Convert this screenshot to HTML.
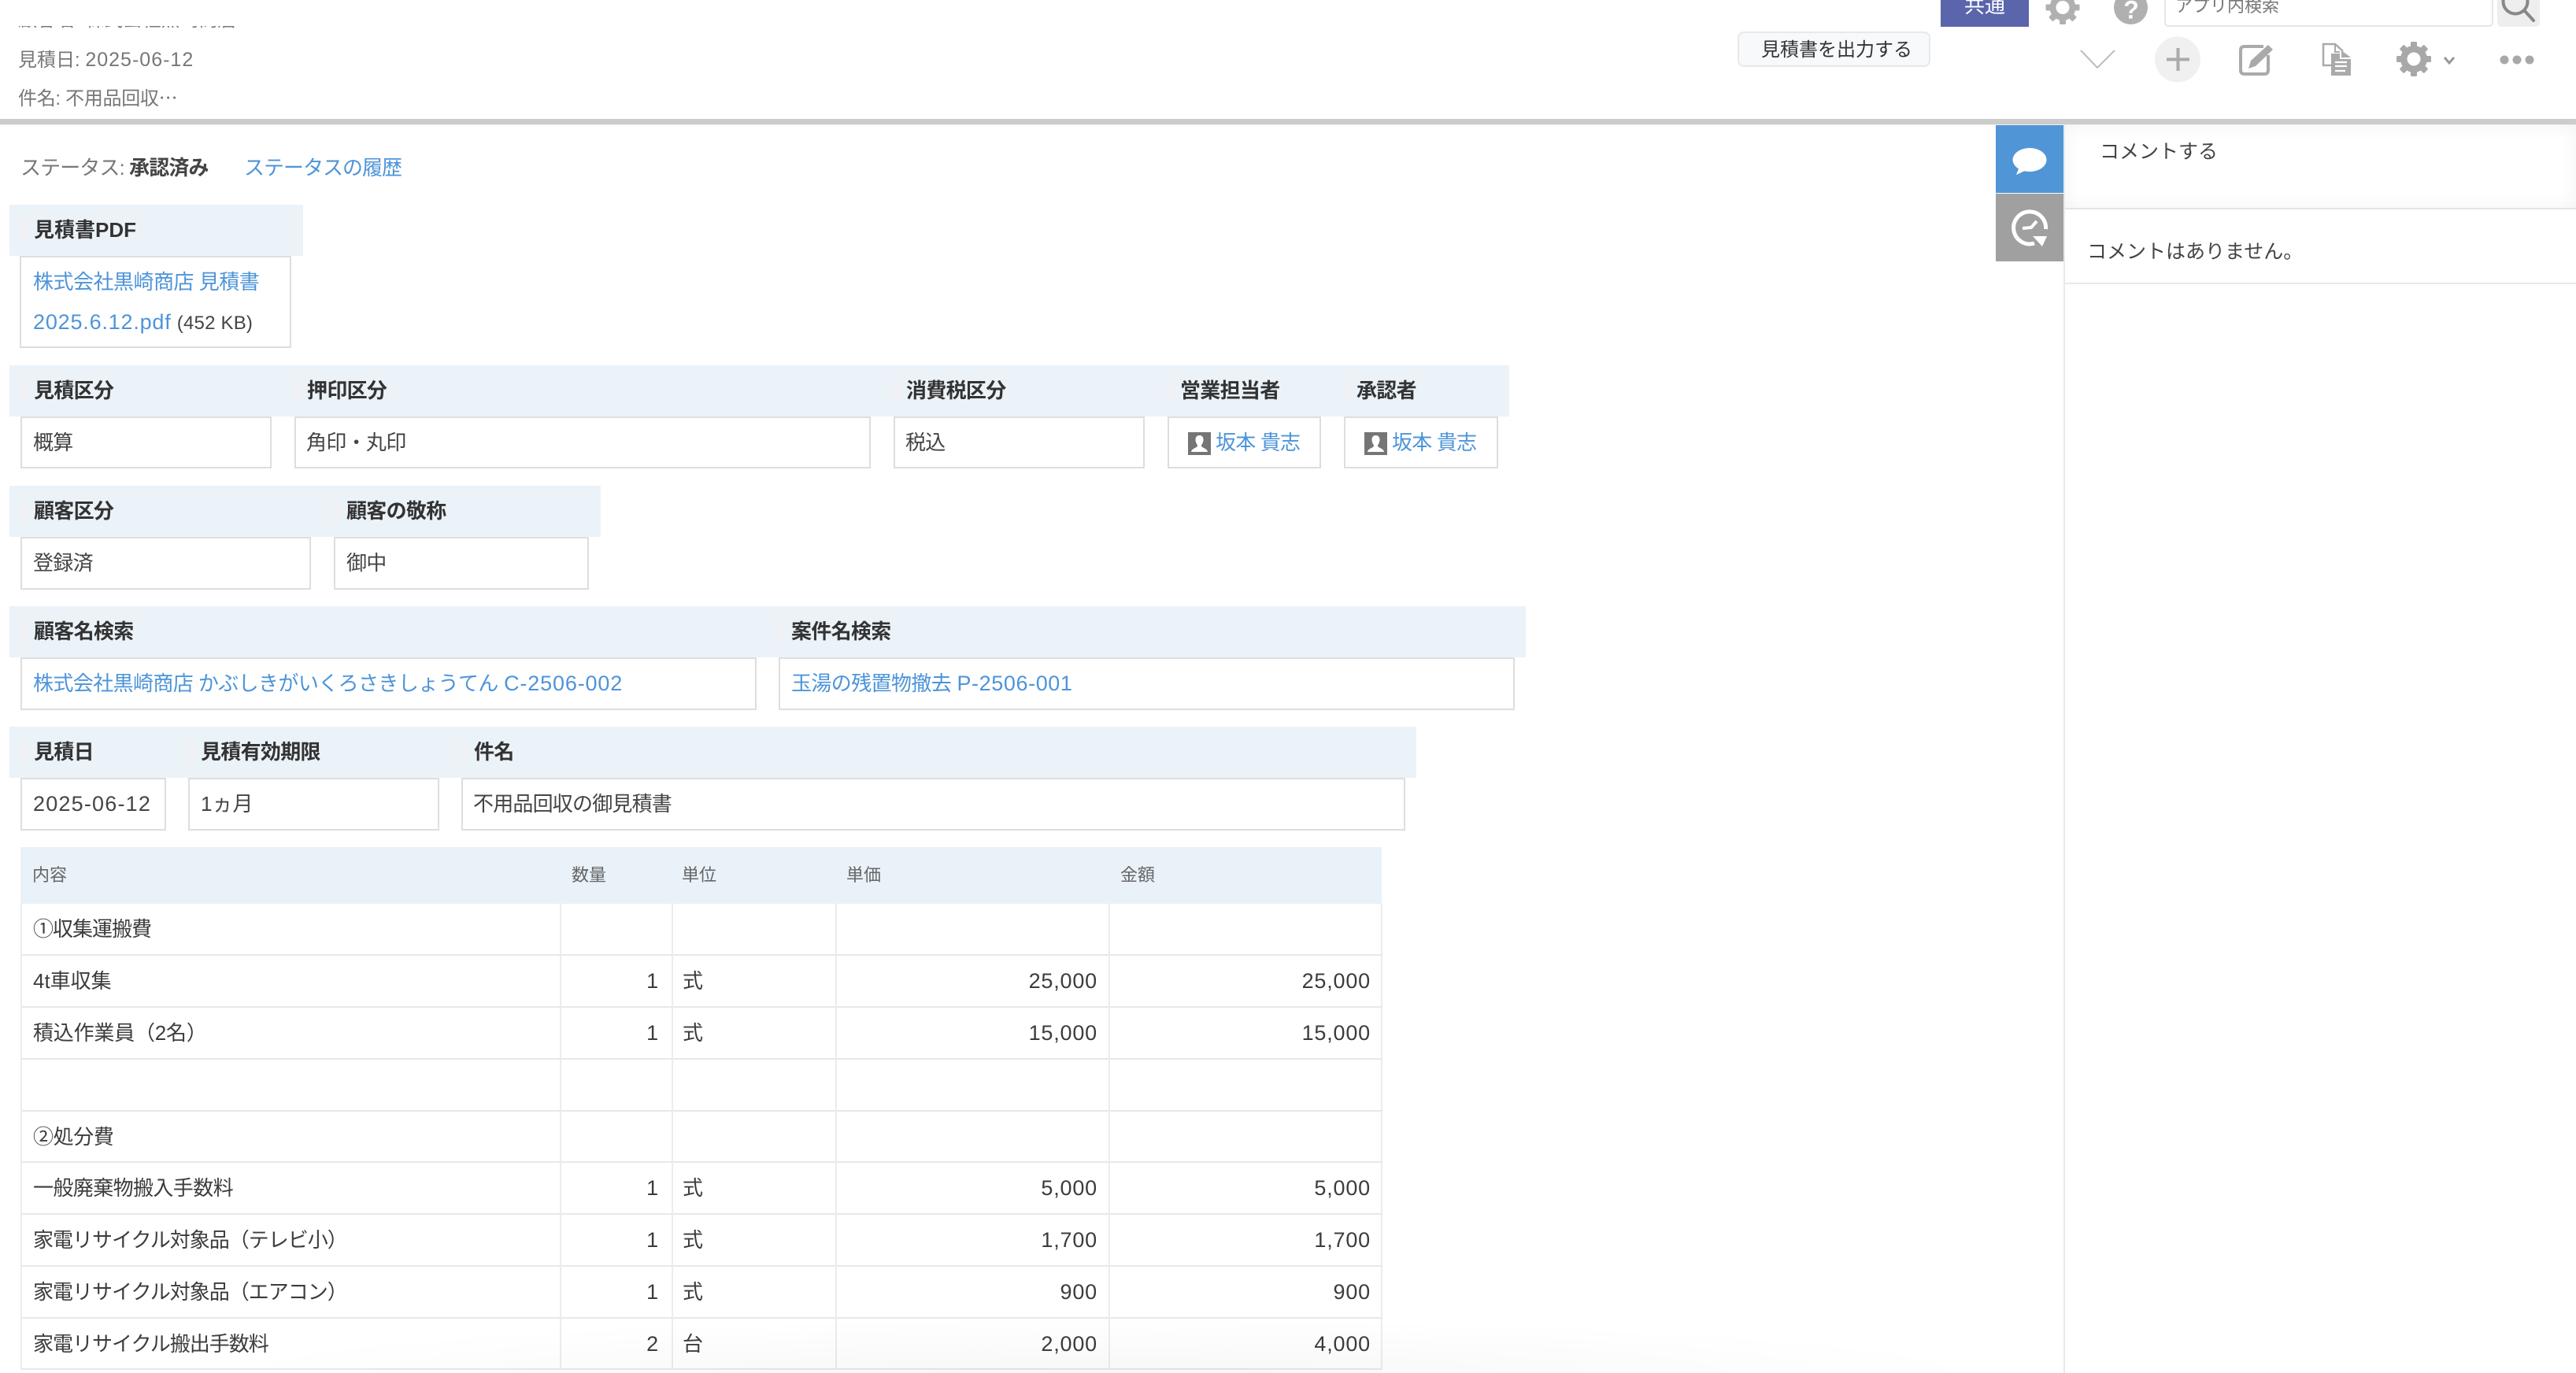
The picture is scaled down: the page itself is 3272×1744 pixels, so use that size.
<!DOCTYPE html>
<html lang="ja">
<head>
<meta charset="utf-8">
<title>見積書</title>
<style>
html,body{margin:0;padding:0;background:#fff}
body{position:relative;width:3272px;height:1744px;overflow:hidden;font-family:"Liberation Sans","Noto Sans CJK JP",sans-serif;color:#333;font-size:26px}
div,span,a,svg{position:absolute;display:block;box-sizing:border-box;white-space:nowrap}
i,u{position:static;display:inline;font-style:normal;text-decoration:none}
svg{overflow:visible}
.meta{left:23px;font-size:24px;line-height:48px;height:48px;color:#777}
.d{font-size:25px;letter-spacing:1px}
.hd{background:#ebf3f9;height:65px}
.bar{width:9px;height:25px;background:#f1f1f5}
.lb{font-weight:700;line-height:36px;height:36px;color:#333;letter-spacing:-.7px}
.box{border:2px solid #dedede;background:#fff}
.v{line-height:36px;height:36px;color:#444;letter-spacing:-.7px}
.lnk{color:#4d94d8}
.r{left:26px;width:1729px;height:66px;border-bottom:2px solid #e8e8e8}
.r span{top:14px;line-height:36px;height:36px;color:#3c3c3c}
.c1{left:16px}.c2{right:918px}.c3{left:841px}.c4{right:361px}.c5{right:14px}
.r .n{font-size:27px;letter-spacing:.8px}
.vl{top:1148px;height:592px;width:2px;background:#ececec}
.th{top:1094px;font-size:22px;line-height:36px;height:36px;color:#666}
</style>
</head>
<body>

<!-- header -->
<div style="left:0;top:33px;width:2000px;height:5px;overflow:hidden"><div class="meta" style="top:-31px">顧客名: 株式会社黒崎商店</div></div>
<div class="meta" style="top:52px">見積日: <i class="d">2025-06-12</i></div>
<div class="meta" style="top:99px;letter-spacing:-.3px">件名: 不用品回収<i style="font-family:'Noto Sans CJK JP',sans-serif">…</i></div>

<div style="left:2465px;top:0;width:112px;height:34px;background:#5a65ab;overflow:hidden"><div style="left:30px;top:-11px;line-height:36px;height:36px;color:#fff;font-size:26px">共通</div></div>

<svg style="left:0;top:0" width="3272" height="110" viewBox="0 0 3272 110">
  <!-- top gear -->
  <g transform="translate(2620 9.5)" fill="#b0b0b0">
    <circle r="16.5"/>
    <rect x="-4" y="-21.5" width="8" height="43" rx="1.5"/>
    <rect x="-4" y="-21.5" width="8" height="43" rx="1.5" transform="rotate(45)"/>
    <rect x="-4" y="-21.5" width="8" height="43" rx="1.5" transform="rotate(90)"/>
    <rect x="-4" y="-21.5" width="8" height="43" rx="1.5" transform="rotate(135)"/>
    <circle r="8.5" fill="#fff"/>
  </g>
  <!-- help -->
  <circle cx="2706.5" cy="9.5" r="21.5" fill="#b0b0b0"/>
  <text x="2707" y="23.5" text-anchor="middle" font-family="Liberation Sans" font-weight="700" font-size="32" fill="#fff">?</text>
  <!-- chevron -->
  <path d="M2643 64L2664 86L2686 64" fill="none" stroke="#bcbcbc" stroke-width="2"/>
  <!-- plus -->
  <circle cx="2766" cy="75.5" r="29" fill="#f0f0f0"/>
  <path d="M2752 75.5H2781M2766.5 61V90" stroke="#aaa" stroke-width="4" fill="none"/>
  <!-- edit -->
  <path d="M2875 59H2851Q2846 59 2846 64V89Q2846 94 2851 94H2876Q2881 94 2881 89V70" fill="none" stroke="#aaa" stroke-width="4"/>
  <path d="M2856 87L2859 77L2881 57L2887 63L2865 84Z" fill="#aaa"/>
  <!-- doc -->
  <path d="M2966 83H2951V56H2966L2976 65" fill="none" stroke="#aaa" stroke-width="2.5"/>
  <path d="M2966 56V66H2972" fill="none" stroke="#aaa" stroke-width="2"/>
  <path d="M2961 68H2972V75H2986V96H2961Z" fill="#aaa"/>
  <path d="M2974 64L2986 73H2974Z" fill="#aaa"/>
  <path d="M2966 79H2981M2966 84H2981M2966 90H2979" stroke="#fff" stroke-width="2.2" fill="none"/>
  <!-- gear 2 -->
  <g transform="translate(3066 75)" fill="#a8a8a8">
    <circle r="17"/>
    <rect x="-4" y="-22" width="8" height="44" rx="1.5"/>
    <rect x="-4" y="-22" width="8" height="44" rx="1.5" transform="rotate(45)"/>
    <rect x="-4" y="-22" width="8" height="44" rx="1.5" transform="rotate(90)"/>
    <rect x="-4" y="-22" width="8" height="44" rx="1.5" transform="rotate(135)"/>
    <circle r="8.5" fill="#fff"/>
  </g>
  <path d="M3105 73L3111 80L3117 73" fill="none" stroke="#999" stroke-width="3"/>
  <circle cx="3181" cy="76" r="5.5" fill="#a8a8a8"/>
  <circle cx="3197" cy="76" r="5.5" fill="#a8a8a8"/>
  <circle cx="3213" cy="76" r="5.5" fill="#a8a8a8"/>
</svg>

<!-- search -->
<div style="left:2749px;top:-6px;width:418px;height:40px;border:2px solid #e6e6e6;border-radius:5px;background:#fff;overflow:hidden"><div style="left:12px;top:-6px;font-size:22px;line-height:36px;height:36px;color:#777">アプリ内検索</div></div>
<div style="left:3172px;top:-6px;width:54px;height:40px;background:#eee;border-radius:5px;overflow:hidden">
  <svg style="left:0;top:0" width="54" height="40" viewBox="3172 -6 54 40"><circle cx="3195" cy="2" r="15.5" fill="none" stroke="#888" stroke-width="4"/><path d="M3207 14L3218 26" stroke="#888" stroke-width="4" stroke-linecap="round"/></svg>
</div>

<div style="left:2207px;top:40px;width:245px;height:45px;background:#f7f9fa;border:2px solid #e6e9eb;border-radius:8px"></div>
<div style="left:2237px;top:46px;line-height:36px;height:36px;font-size:24px;color:#333">見積書を出力する</div>

<!-- divider -->
<div style="left:0;top:151px;width:3272px;height:7px;background:#ccc"></div>
<div style="left:0;top:158px;width:3272px;height:1px;background:#eee"></div>

<!-- status -->
<div style="left:26px;top:195px;line-height:36px;height:36px;color:#777;letter-spacing:-.9px">ステータス: <b style="color:#444">承認済み</b></div>
<div class="lnk" style="left:310px;top:195px;line-height:36px;height:36px;letter-spacing:-1px">ステータスの履歴</div>

<!-- PDF -->
<div class="hd" style="left:12px;top:260px;width:373px"></div>
<div class="bar" style="left:26px;top:279px"></div>
<div class="lb" style="left:43px;top:274px;letter-spacing:0">見積書<i>PDF</i></div>
<div class="box" style="left:25px;top:325px;width:345px;height:117px"></div>
<div class="v lnk" style="left:42px;top:340px;letter-spacing:-.5px">株式会社黒崎商店 見積書</div>
<div class="v" style="left:42px;top:391px;letter-spacing:0"><i class="lnk" style="font-size:27px;letter-spacing:.8px">2025.6.12.pdf</i> <i style="font-size:24px;color:#444;letter-spacing:.2px">(452 KB)</i></div>

<!-- row 2 -->
<div class="hd" style="left:12px;top:464px;width:1905px"></div>
<div class="bar" style="left:26px;top:484px"></div><div class="lb" style="left:43px;top:478px">見積区分</div>
<div class="bar" style="left:374px;top:484px"></div><div class="lb" style="left:390px;top:478px">押印区分</div>
<div class="bar" style="left:1135px;top:484px"></div><div class="lb" style="left:1151px;top:478px">消費税区分</div>
<div class="bar" style="left:1483px;top:484px"></div><div class="lb" style="left:1499px;top:478px">営業担当者</div>
<div class="bar" style="left:1707px;top:484px"></div><div class="lb" style="left:1723px;top:478px">承認者</div>
<div class="box" style="left:26px;top:529px;width:319px;height:66px"></div><div class="v" style="left:42px;top:544px">概算</div>
<div class="box" style="left:374px;top:529px;width:732px;height:66px"></div><div class="v" style="left:389px;top:544px">角印・丸印</div>
<div class="box" style="left:1135px;top:529px;width:319px;height:66px"></div><div class="v" style="left:1150px;top:544px">税込</div>
<div class="box" style="left:1483px;top:529px;width:195px;height:66px"></div>
<svg style="left:1509px;top:549px" width="29" height="29" viewBox="0 0 29 29"><rect width="29" height="29" fill="#757575"/><path d="M14.5 4C11 4 9.5 6.5 9.5 9.5C9.5 12.5 11 15 12 16.5C12.5 18 11 19 8 20.5C6 21.5 4.5 22.5 4 25H25C24.5 22.5 23 21.5 21 20.5C18 19 16.5 18 17 16.5C18 15 19.5 12.5 19.5 9.5C19.5 6.5 18 4 14.5 4Z" fill="#fff"/></svg>
<div class="v lnk" style="left:1544px;top:544px;letter-spacing:-.8px">坂本 貴志</div>
<div class="box" style="left:1707px;top:529px;width:196px;height:66px"></div>
<svg style="left:1733px;top:549px" width="29" height="29" viewBox="0 0 29 29"><rect width="29" height="29" fill="#757575"/><path d="M14.5 4C11 4 9.5 6.5 9.5 9.5C9.5 12.5 11 15 12 16.5C12.5 18 11 19 8 20.5C6 21.5 4.5 22.5 4 25H25C24.5 22.5 23 21.5 21 20.5C18 19 16.5 18 17 16.5C18 15 19.5 12.5 19.5 9.5C19.5 6.5 18 4 14.5 4Z" fill="#fff"/></svg>
<div class="v lnk" style="left:1768px;top:544px;letter-spacing:-.8px">坂本 貴志</div>

<!-- row 3 -->
<div class="hd" style="left:12px;top:617px;width:751px"></div>
<div class="bar" style="left:26px;top:637px"></div><div class="lb" style="left:43px;top:631px">顧客区分</div>
<div class="bar" style="left:424px;top:637px"></div><div class="lb" style="left:440px;top:631px">顧客の敬称</div>
<div class="box" style="left:26px;top:682px;width:369px;height:67px"></div><div class="v" style="left:42px;top:697px">登録済</div>
<div class="box" style="left:424px;top:682px;width:324px;height:67px"></div><div class="v" style="left:440px;top:697px">御中</div>

<!-- row 4 -->
<div class="hd" style="left:12px;top:770px;width:1926px"></div>
<div class="bar" style="left:26px;top:790px"></div><div class="lb" style="left:43px;top:784px">顧客名検索</div>
<div class="bar" style="left:989px;top:790px"></div><div class="lb" style="left:1005px;top:784px">案件名検索</div>
<div class="box" style="left:26px;top:835px;width:935px;height:67px"></div>
<div class="v lnk" style="left:42px;top:850px;letter-spacing:0"><i style="letter-spacing:-.6px">株式会社黒崎商店 かぶしきがいくろさきしょうてん</i> <i style="font-size:27px;letter-spacing:.85px">C-2506-002</i></div>
<div class="box" style="left:989px;top:835px;width:935px;height:67px"></div>
<div class="v lnk" style="left:1005px;top:850px;letter-spacing:0"><i style="letter-spacing:-.6px">玉湯の残置物撤去</i> <i style="font-size:27px;letter-spacing:.6px">P-2506-001</i></div>

<!-- row 5 -->
<div class="hd" style="left:12px;top:923px;width:1787px"></div>
<div class="bar" style="left:26px;top:943px"></div><div class="lb" style="left:43px;top:937px">見積日</div>
<div class="bar" style="left:239px;top:943px"></div><div class="lb" style="left:255px;top:937px">見積有効期限</div>
<div class="bar" style="left:586px;top:943px"></div><div class="lb" style="left:602px;top:937px">件名</div>
<div class="box" style="left:26px;top:988px;width:185px;height:67px"></div><div class="v" style="left:42px;top:1003px;font-size:27px;letter-spacing:1.2px">2025-06-12</div>
<div class="box" style="left:239px;top:988px;width:319px;height:67px"></div><div class="v" style="left:255px;top:1003px;letter-spacing:0">1ヵ月</div>
<div class="box" style="left:586px;top:988px;width:1199px;height:67px"></div><div class="v" style="left:601px;top:1003px;letter-spacing:-.8px">不用品回収の御見積書</div>

<!-- table -->
<div style="left:26px;top:1076px;width:1729px;height:72px;background:#e9f2f9"></div>
<div class="th" style="left:41px">内容</div>
<div class="th" style="left:726px">数量</div>
<div class="th" style="left:866px">単位</div>
<div class="th" style="left:1075px">単価</div>
<div class="th" style="left:1423px">金額</div>

<div class="r" style="top:1148px"><span class="c1" style="letter-spacing:-1px">①収集運搬費</span></div>
<div class="r" style="top:1214px"><span class="c1">4t車収集</span><span class="c2 n">1</span><span class="c3">式</span><span class="c4 n">25,000</span><span class="c5 n">25,000</span></div>
<div class="r" style="top:1280px"><span class="c1" style="letter-spacing:-.2px">積込作業員（2名）</span><span class="c2 n">1</span><span class="c3">式</span><span class="c4 n">15,000</span><span class="c5 n">15,000</span></div>
<div class="r" style="top:1346px"></div>
<div class="r" style="top:1412px;height:65px"><span class="c1" style="letter-spacing:-.4px">②処分費</span></div>
<div class="r" style="top:1477px"><span class="c1" style="letter-spacing:-.6px">一般廃棄物搬入手数料</span><span class="c2 n">1</span><span class="c3">式</span><span class="c4 n">5,000</span><span class="c5 n">5,000</span></div>
<div class="r" style="top:1543px"><span class="c1" style="letter-spacing:-1px">家電リサイクル対象品（テレビ小）</span><span class="c2 n">1</span><span class="c3">式</span><span class="c4 n">1,700</span><span class="c5 n">1,700</span></div>
<div class="r" style="top:1609px"><span class="c1" style="letter-spacing:-1px">家電リサイクル対象品（エアコン）</span><span class="c2 n">1</span><span class="c3">式</span><span class="c4 n">900</span><span class="c5 n">900</span></div>
<div class="r" style="top:1675px;height:65px"><span class="c1" style="letter-spacing:-1px">家電リサイクル搬出手数料</span><span class="c2 n">2</span><span class="c3">台</span><span class="c4 n">2,000</span><span class="c5 n">4,000</span></div>
<div class="vl" style="left:26px"></div>
<div class="vl" style="left:711px"></div>
<div class="vl" style="left:853px"></div>
<div class="vl" style="left:1061px"></div>
<div class="vl" style="left:1408px"></div>
<div class="vl" style="left:1754px"></div>

<!-- side tabs -->
<div style="left:2535px;top:159px;width:86px;height:86px;background:#5096d6"></div>
<svg style="left:2535px;top:159px" width="86" height="86" viewBox="2535 159 86 86"><ellipse cx="2578" cy="203" rx="21.5" ry="15" fill="#fff"/><path d="M2565 212L2561 222L2574 216Z" fill="#fff"/></svg>
<div style="left:2535px;top:246px;width:86px;height:86px;background:#a0a0a0"></div>
<svg style="left:2535px;top:246px" width="86" height="86" viewBox="2535 246 86 86"><path d="M2598.5 291A20.5 20.5 0 1 0 2584 309" fill="none" stroke="#fff" stroke-width="5"/><path d="M2582 300H2600L2594 313Z" fill="#fff"/><path d="M2569 290L2580 289L2587 281" fill="none" stroke="#fff" stroke-width="4"/></svg>

<!-- comment panel -->
<div style="left:2621px;top:159px;width:2px;height:1585px;background:#e9e9e9"></div>
<div style="left:2623px;top:159px;width:649px;height:105px;background:#fff;box-shadow:inset 0 0 24px rgba(0,0,0,.05)"></div>
<div style="left:2623px;top:264px;width:649px;height:2px;background:#e5e5e5"></div>
<div style="left:2667px;top:175px;font-size:25px;line-height:36px;height:36px;color:#444">コメントする</div>
<div style="left:2651px;top:302px;font-size:25px;line-height:36px;height:36px;color:#444">コメントはありません。</div>
<div style="left:2623px;top:359px;width:649px;height:2px;background:#e8e8e8"></div>

<!-- bottom fade -->
<div style="left:0;top:1640px;width:2621px;height:104px;background:radial-gradient(ellipse 1150px 70px at 1400px 104px,rgba(0,0,0,.03),rgba(0,0,0,0))"></div>

</body>
</html>
